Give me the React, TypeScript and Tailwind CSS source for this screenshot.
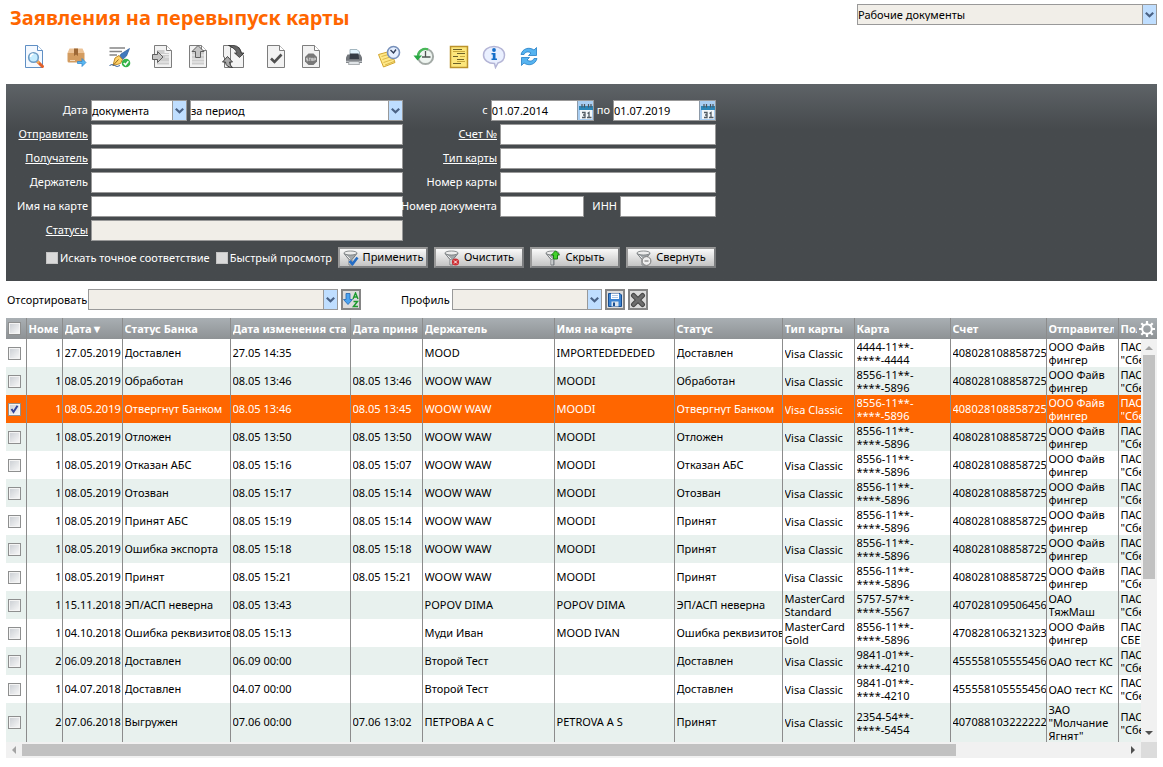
import { type ReactNode } from 'react'

/** Список заявлений на перевыпуск карты: панель действий, фильтр, сортировка, таблица. */

type Row = {
  num: string
  date: string
  bankStatus: string
  changed: string
  accepted: string
  holder: string
  cardName: string
  status: string
  type: string
  card: string
  account: string
  sender: string
  receiver: string
}

const SBER = 'ПАО "Сбербанк"'
const FIVE = 'ООО Файв фингер'
const ACC = '4080281088587257'

const woow = (bankStatus: string, changed: string, accepted: string, status = bankStatus): Row => ({
  num: '1', date: '08.05.2019', bankStatus, changed, accepted, holder: 'WOOW WAW', cardName: 'MOODI',
  status, type: 'Visa Classic', card: '8556-11**-****-5896', account: ACC, sender: FIVE, receiver: SBER,
})

const ROWS: Row[] = [
  { ...woow('Доставлен', '27.05 14:35', ''), date: '27.05.2019', holder: 'MOOD', cardName: 'IMPORTEDEDEDED', card: '4444-11**-****-4444' },
  woow('Обработан', '08.05 13:46', '08.05 13:46'),
  woow('Отвергнут Банком', '08.05 13:46', '08.05 13:45'),
  woow('Отложен', '08.05 13:50', '08.05 13:50'),
  woow('Отказан АБС', '08.05 15:16', '08.05 15:07'),
  woow('Отозван', '08.05 15:17', '08.05 15:14'),
  woow('Принят АБС', '08.05 15:19', '08.05 15:14', 'Принят'),
  woow('Ошибка экспорта', '08.05 15:18', '08.05 15:18', 'Принят'),
  woow('Принят', '08.05 15:21', '08.05 15:21'),
  { num: '1', date: '15.11.2018', bankStatus: 'ЭП/АСП неверна', changed: '08.05 13:43', accepted: '', holder: 'POPOV DIMA', cardName: 'POPOV DIMA', status: 'ЭП/АСП неверна', type: 'MasterCard Standard', card: '5757-57**-****-5567', account: '4070281095064560', sender: 'ОАО ТяжМаш', receiver: SBER },
  { num: '1', date: '04.10.2018', bankStatus: 'Ошибка реквизитов', changed: '08.05 15:13', accepted: '', holder: 'Муди Иван', cardName: 'MOOD IVAN', status: 'Ошибка реквизитов', type: 'MasterCard Gold', card: '8556-11**-****-5896', account: '4708281063213232', sender: FIVE, receiver: 'ПАО СБЕРБАНК' },
  { num: '2', date: '06.09.2018', bankStatus: 'Доставлен', changed: '06.09 00:00', accepted: '', holder: 'Второй Тест', cardName: '', status: 'Доставлен', type: 'Visa Classic', card: '9841-01**-****-4210', account: '4555581055554564', sender: 'ОАО тест КС', receiver: SBER },
  { num: '1', date: '04.07.2018', bankStatus: 'Доставлен', changed: '04.07 00:00', accepted: '', holder: 'Второй Тест', cardName: '', status: 'Доставлен', type: 'Visa Classic', card: '9841-01**-****-4210', account: '4555581055554564', sender: 'ОАО тест КС', receiver: SBER },
  { num: '2', date: '07.06.2018', bankStatus: 'Выгружен', changed: '07.06 00:00', accepted: '07.06 13:02', holder: 'ПЕТРОВА А С', cardName: 'PETROVA A S', status: 'Принят', type: 'Visa Classic', card: '2354-54**-****-5454', account: '4070881032222222', sender: 'ЗАО "Молчание Ягнят"', receiver: SBER },
]

const SELECTED = 2

const COLUMNS: { key: keyof Row; title: string; width: string }[] = [
  { key: 'num', title: 'Номер', width: 'w-[36px]' },
  { key: 'date', title: 'Дата▼', width: 'w-[60px]' },
  { key: 'bankStatus', title: 'Статус Банка', width: 'w-[108px]' },
  { key: 'changed', title: 'Дата изменения статуса', width: 'w-[120px]' },
  { key: 'accepted', title: 'Дата принятия', width: 'w-[72px]' },
  { key: 'holder', title: 'Держатель', width: 'w-[132px]' },
  { key: 'cardName', title: 'Имя на карте', width: 'w-[120px]' },
  { key: 'status', title: 'Статус', width: 'w-[108px]' },
  { key: 'type', title: 'Тип карты', width: 'w-[72px]' },
  { key: 'card', title: 'Карта', width: 'w-[96px]' },
  { key: 'account', title: 'Счет', width: 'w-[96px]' },
  { key: 'sender', title: 'Отправитель', width: 'w-[72px]' },
  { key: 'receiver', title: 'Получатель', width: '' },
]

/** Столбцы, в которых текст переносится на несколько строк. */
const WRAPPED: (keyof Row)[] = ['card', 'type', 'sender', 'receiver']

/* ---------- Значки ---------- */

function Svg({ size = 24, children }: { size?: number; children: ReactNode }) {
  return (
    <svg width={size} height={size} viewBox={`0 0 ${size} ${size}`} fill="none" aria-hidden="true" className="shrink-0">
      {children}
    </svg>
  )
}

function Sheet({ blue = false }: { blue?: boolean }) {
  const line = blue ? '#5f8fc4' : '#7d7d7d'
  return (
    <>
      <path d="M3.500 .5H15.500L20.500 5.500V22.500H3.500Z" fill={blue ? '#f4f9ff' : '#f2f2f2'} stroke={line} />
      <path d="M15.500 .5V5.500H20.500" fill="#fff" stroke={line} />
    </>
  )
}

const ViewIcon = () => (
  <Svg>
    <Sheet blue />
    <path d="M15.500 16.500L20.500 21.500" stroke="#e2602a" strokeWidth="3" strokeLinecap="round" />
    <path d="M15 16L17 18" stroke="#f0b45a" strokeWidth="2" />
    <circle cx="11.500" cy="12.500" r="4.800" fill="#c4ecff" stroke="#6d9cc4" strokeWidth="1.600" />
    <path d="M8.500 12a3 3 0 0 1 3-3" stroke="#fff" strokeWidth="1.500" />
  </Svg>
)

const BoxIcon = () => (
  <Svg>
    <path d="M4.500 3.500H17.500L19.500 8H2.500Z" fill="#ecc295" />
    <path d="M2.500 8H19.500V16Q19.500 17.500 18 17.500H4Q2.500 17.500 2.500 16Z" fill="#d39c60" />
    <path d="M5 15.500H10" stroke="#f3dcc0" />
    <path d="M9 3.500H13V11L11 9.500L9 11Z" fill="#9d6836" />
    <path d="M12.500 16.500H17V13.500L21 17.500L17 21.500V18.500H12.500Z" fill="#58b7f2" stroke="#2d83c9" strokeWidth=".7" />
  </Svg>
)

const SignIcon = () => (
  <Svg>
    <path d="M1.500 3H17M1.500 6.500H14M1.500 10H9" stroke="#858585" strokeWidth="1.400" />
    <path d="M21.500 3.500L13 9L10.500 13L13.500 15.500L18.500 11Z" fill="#4179bd" stroke="#2c5b9b" strokeWidth=".7" />
    <path d="M5 20.500L7 13L11 10.500L14.500 14.500L12.500 18.500Z" fill="#ffd36a" stroke="#bf8b2a" />
    <path d="M5 20.500L10.500 14.500" stroke="#96651b" />
    <path d="M1.500 20.500Q4 18.500 6.500 20.500T12 20.500" stroke="#38649c" />
    <circle cx="18" cy="18" r="4.300" fill="#35b44a" />
    <path d="M15.700 18L17.500 19.800L20.400 16.200" stroke="#fff" strokeWidth="1.500" />
  </Svg>
)

const ImportIcon = () => (
  <Svg>
    <Sheet />
    <path d="M6 5H13.500V8H18V19.500H6Z" fill="#cdcdcd" />
    <path d="M6 9.500H18M14 12H18M6 17H18" stroke="#efefef" />
    <path d="M1.500 9.500H6.500V6.500L12 12L6.500 17.500V14.500H1.500Z" fill="#c5c5c5" stroke="#5e5e5e" />
  </Svg>
)

const ExportIcon = () => (
  <Svg>
    <Sheet />
    <path d="M6 6H18V19.500H6Z" fill="#cdcdcd" />
    <path d="M6 10H9M15 10H18M6 14H18M6 17H18" stroke="#efefef" />
    <path d="M9.500 12.500V6.500H6L12 .5L18 6.500H14.500V12.500Z" fill="#c5c5c5" stroke="#5e5e5e" />
  </Svg>
)

const ExchangeIcon = () => (
  <Svg>
    <path d="M2.500 .5H9L12 4V22.500H3.500V12H2.500Z" fill="#f2f2f2" stroke="#777" />
    <path d="M9.500 2.500H18L22.500 11V22.500H9.500Z" fill="#f4f4f4" stroke="#777" />
    <path d="M7.500 .5H13Q19 1 20 8H23L18.500 12.500L13.500 8H16Q14 3 7.500 .5Z" fill="#666" stroke="#222" strokeWidth=".7" />
    <path d="M1.500 17L6.500 11.500L11.500 17H8.500Q8.500 20 11.500 22.500Q4.500 22 4.500 17Z" fill="#aaa" stroke="#333" strokeWidth=".9" />
  </Svg>
)

const CheckIcon = () => (
  <Svg>
    <Sheet />
    <path d="M7 13.500L10.500 17L17.500 9.500" stroke="#505050" strokeWidth="2.600" />
  </Svg>
)

const StopIcon = () => (
  <Svg>
    <Sheet />
    <path d="M9.500 8.500H14.500L18 12V16.500L14.500 20H9.500L6 16.500V12Z" fill="#787878" />
    <path d="M7.500 13.200H9M7.500 13.200V14.500H9V15.800H7.500M9.800 13.200H11.800M10.800 13.200V16M12.600 13.200H13.600V15.600H12.600ZM14.800 16V13.200H16.500V14.800H15" stroke="#dedede" strokeWidth=".8" />
  </Svg>
)

const PrintIcon = () => (
  <Svg>
    <path d="M8 10V4.500H15L17.500 7V12H8Z" fill="#e3f5ff" stroke="#a4b7c0" />
    <path d="M5.500 9.500H18.500L20 12.500V18H4V12.500Z" fill="#73777c" />
    <path d="M8 8.500H16.500L17 14H7.500Z" fill="#353c46" />
    <path d="M4 16.500H20" stroke="#b9bcc0" strokeWidth="1.500" />
    <path d="M7 16.500H17L17.500 19.500H6.500Z" fill="#e0e4e7" stroke="#8f9397" strokeWidth=".7" />
  </Svg>
)

const NoteClockIcon = () => (
  <Svg>
    <path d="M1.500 9.500L14 6L18 17.500L6.500 22Z" fill="#ffe887" stroke="#d2a52f" />
    <path d="M4.500 11.500L15 8.500M5.500 14.500L16 11M6.500 17.500L17 14M8 20L17 16.500" stroke="#dcb84b" />
    <circle cx="16.500" cy="7.500" r="6" fill="#e5efff" stroke="#7790ba" strokeWidth="1.600" />
    <path d="M13.500 5L16.500 8L19 4.500" stroke="#303d58" strokeWidth="1.400" />
  </Svg>
)

const HistoryIcon = () => (
  <Svg>
    <circle cx="13.500" cy="11.500" r="7.600" fill="#eff5f1" stroke="#a3aaa6" strokeWidth="2" />
    <path d="M16 4.400A7.600 7.600 0 0 0 5.900 11" stroke="#48b858" strokeWidth="2.200" />
    <path d="M1.500 10.500H10L5.500 15.500Z" fill="#29a744" />
    <path d="M13.500 6V12H18.500M10 12H13" stroke="#505553" strokeWidth="1.300" />
  </Svg>
)

const JournalIcon = () => (
  <Svg>
    <path d="M3.500 1.500H20.500V22.500H3.500Z" fill="#fce67b" stroke="#bb922b" strokeWidth="1.500" />
    <path d="M6 4.500H15M10 8.500H18M6 11.500H11M10 14.500H17M6 18.500H14" stroke="#6b612b" strokeWidth="1.200" />
    <path d="M6 6.500H18M13 11.500H18M10 16.500H18" stroke="#c9a93d" />
  </Svg>
)

const InfoIcon = () => (
  <Svg>
    <path d="M12 1.500C18 1.500 22.500 5 22.500 10C22.500 14 20 17 16 18L13.500 22.500L12.500 18.500C6 18.500 1.500 15 1.500 10C1.500 5 6 1.500 12 1.500Z" fill="#eaf0ff" stroke="#b4b5d6" strokeWidth="1.500" />
    <circle cx="12" cy="5" r="1.900" fill="#176fc9" />
    <path d="M9.500 8H13.500V13.500H15V15H9.500V13.500H10.800V9.500H9.500Z" fill="#176fc9" />
  </Svg>
)

const RefreshIcon = () => (
  <Svg>
    <path d="M4 9.500C5.500 3.500 12 1.500 17 5L19.500 2.500V10.500H11.500L14 8C11 6 8 7 7 9.500Z" fill="#56b3f0" stroke="#257fc5" strokeWidth=".8" />
    <path d="M20 13.500C18.500 19.500 12 21.500 7 18L4.500 20.500V12.500H12.500L10 15C13 17 16 16 17 13.500Z" fill="#56b3f0" stroke="#257fc5" strokeWidth=".8" />
  </Svg>
)

/** Воронка — основа значков на кнопках фильтра. */
const Funnel = () => (
  <>
    <path d="M1 3.500L6 9.500V15H9V9.500L14 3.500Z" fill="#a3a8ab" stroke="#666b6e" strokeWidth=".8" />
    <path d="M7 10V14.500M3.500 5.500L7 9" stroke="#eee" />
    <ellipse cx="7.500" cy="3" rx="6.500" ry="2" fill="#ececec" stroke="#6e7376" strokeWidth=".8" />
  </>
)

const ApplyIcon = () => (
  <Svg size={16}><Funnel /><path d="M6.500 11L9.500 14L14.500 7.500" stroke="#246cc4" strokeWidth="2.600" /></Svg>
)
const ClearIcon = () => (
  <Svg size={16}>
    <Funnel />
    <circle cx="11.500" cy="12" r="3.600" fill="#cf2e34" />
    <path d="M10 10.500L13 13.500M13 10.500L10 13.500" stroke="#fff" />
  </Svg>
)
const HideIcon = () => (
  <Svg size={16}><Funnel /><path d="M8.500 9V5H6.500L10.500 .8L14.500 5H12.500V9Z" fill="#43d22c" stroke="#16810d" /></Svg>
)
const CollapseIcon = () => (
  <Svg size={16}>
    <Funnel />
    <circle cx="10.500" cy="11" r="4.400" fill="#eee" stroke="#777" />
    <path d="M8.500 11H12.500" stroke="#666" />
  </Svg>
)

const SortIcon = () => (
  <Svg size={16}>
    <path d="M3 1.500H7V7.500H9.500L5 12.500L.5 7.500H3Z" fill="#4ba3f0" stroke="#2164b0" strokeWidth=".8" />
    <path d="M10 7L12.500 1L15 7M11 5H14" stroke="#1c9a2e" strokeWidth="1.400" />
    <path d="M10.500 9.500H14.500L10.500 14.500H15" stroke="#1c9a2e" strokeWidth="1.500" />
  </Svg>
)

const SaveIcon = () => (
  <Svg size={16}>
    <path d="M1.500 1.500H13L14.500 3V14.500H1.500Z" fill="#3b83d2" stroke="#164d91" />
    <path d="M4 1.500H12V7H4Z" fill="#fff" />
    <path d="M5 3.500H11M5 5.500H11" stroke="#a9c5e5" />
    <path d="M4.500 9.500H11.500V14.500H4.500Z" fill="#dce4ed" />
    <path d="M6 10.500H8V14H6Z" fill="#194e90" />
  </Svg>
)

const DeleteIcon = () => (
  <Svg size={16}>
    <path d="M3.500 3.500L12.500 12.500M12.500 3.500L3.500 12.500" stroke="#474747" strokeWidth="5" strokeLinecap="round" />
    <path d="M3.500 3.500L12.500 12.500M12.500 3.500L3.500 12.500" stroke="#6d6d6d" strokeWidth="3" strokeLinecap="round" />
  </Svg>
)

const GearIcon = () => (
  <Svg size={16}>
    <circle cx="8" cy="8" r="4.800" stroke="#fff" strokeWidth="2" />
    <path d="M8 0V3.500M8 12.500V16M0 8H3.500M12.500 8H16M2.300 2.300L4.800 4.800M11.200 11.200L13.700 13.700M13.700 2.300L11.200 4.800M4.800 11.200L2.300 13.700" stroke="#fff" strokeWidth="2.200" />
  </Svg>
)

const CalendarIcon = () => (
  <svg width="16" height="19" viewBox="0 0 16 19" fill="none" aria-hidden="true">
    <rect width="16" height="19" fill="#a9cef2" />
    <path d="M.5 0V19" stroke="#8d9aa8" />
    <path d="M3 8H15V18H3Z" fill="#f3f7fa" />
    <path d="M2 5H16V9H2Z" fill="#2b86b8" />
    <path d="M5 3V6.500M7.500 3V6.500M11.500 3V6.500M14 3V6.500" stroke="#4e555b" strokeWidth="1.200" />
    <path d="M5 11.500H8V16.500H5M6 14H8M10.500 12.500L12 11.500V16.500M10 16.500H14.500" stroke="#515b64" strokeWidth="1.300" />
  </svg>
)

/* ---------- Элементы формы ---------- */

const FIELD = 'h-[21px] border border-[#999] px-px text-black outline-none rounded-none'

function Select({ label, value, width, muted = false }: { label: string; value: string; width: string; muted?: boolean }) {
  return (
    <div className={`relative ${width}`}>
      <select aria-label={label} className={`block h-[21px] w-full appearance-none rounded-none border border-[#999] text-black outline-none ${muted ? 'bg-[#f1eee8]' : 'bg-white'}`}>
        <option>{value}</option>
      </select>
      <span className="pointer-events-none absolute inset-y-px right-px flex w-[14px] items-center justify-center border-l border-[#999] bg-[#bfdeff]">
        <svg width="9" height="6" viewBox="0 0 9 6" fill="none"><path d="M.8 .8L4.500 4.200L8.200 .8" stroke="#4a6285" strokeWidth="2.200" /></svg>
      </span>
    </div>
  )
}

function DateField({ id, value }: { id: string; value: string }) {
  return (
    <div className="flex h-[21px] w-[103px] border border-[#999] bg-white">
      <input id={id} defaultValue={value} className="min-w-0 flex-1 text-black outline-none" />
      <button type="button" aria-label="Календарь"><CalendarIcon /></button>
    </div>
  )
}

function Label({ htmlFor, link = false, children }: { htmlFor: string; link?: boolean; children: ReactNode }) {
  return (
    <label htmlFor={htmlFor} className={`flex justify-end pr-[3px] pb-0.5 whitespace-nowrap ${link ? 'underline' : ''}`}>
      {children}
    </label>
  )
}

function FilterButton({ icon, children }: { icon: ReactNode; children: ReactNode }) {
  return (
    <button
      type="button"
      className="flex h-[21px] w-[90px] items-center justify-center gap-1 border-2 border-[#7b7d7f] border-t-[#999] border-l-[#999] bg-linear-to-b from-[#fafafa] to-[#c4c4c4] whitespace-nowrap text-black"
    >
      {icon}
      <span className="pb-0.5">{children}</span>
    </button>
  )
}

function SquareButton({ label, children }: { label: string; children: ReactNode }) {
  return (
    <button type="button" aria-label={label} className="flex h-[21px] w-5 items-center justify-center border-2 border-[#858585] bg-[#dcdcdc]">
      {children}
    </button>
  )
}

function Check({ label, checked = false }: { label: string; checked?: boolean }) {
  return (
    <span className="relative block size-[13px]">
      <input
        type="checkbox"
        aria-label={label}
        defaultChecked={checked}
        className="block size-[13px] appearance-none border border-[#8e8f8f] bg-linear-to-br from-[#c9cdd2] to-[#fafafa] shadow-[inset_0_0_0_1px_#f4f4f4]"
      />
      {checked && (
        <svg viewBox="0 0 13 13" fill="none" className="pointer-events-none absolute inset-0">
          <path d="M3.500 6L5.500 9L9.500 2.800" stroke="#31439a" strokeWidth="2" />
        </svg>
      )}
    </span>
  )
}

/* ---------- Блоки страницы ---------- */

const TOOLBAR: { label: string; Icon: () => ReactNode }[][] = [
  [{ label: 'Просмотр', Icon: ViewIcon }],
  [{ label: 'В архив', Icon: BoxIcon }],
  [{ label: 'Подписать', Icon: SignIcon }],
  [{ label: 'Импорт', Icon: ImportIcon }, { label: 'Экспорт', Icon: ExportIcon }, { label: 'Обмен', Icon: ExchangeIcon }],
  [{ label: 'Принять', Icon: CheckIcon }, { label: 'Отвергнуть', Icon: StopIcon }],
  [
    { label: 'Печать', Icon: PrintIcon },
    { label: 'Отложить', Icon: NoteClockIcon },
    { label: 'История', Icon: HistoryIcon },
    { label: 'Журнал', Icon: JournalIcon },
    { label: 'Информация', Icon: InfoIcon },
    { label: 'Обновить', Icon: RefreshIcon },
  ],
]

function Toolbar() {
  return (
    <div className="flex gap-[19px] pt-[15px] pl-4">
      {TOOLBAR.map((group) => (
        <div key={group[0].label} className="flex gap-[11px]">
          {group.map(({ label, Icon }) => (
            <button key={label} type="button" aria-label={label} title={label} className="size-6">
              <Icon />
            </button>
          ))}
        </div>
      ))}
    </div>
  )
}

function FilterPanel() {
  return (
    <form className="mt-[15px] bg-[#464a4d] bg-linear-to-b from-[#5e6367] to-[#464a4d] to-[45px] pt-4 pb-[13px] text-white">
      <div className="grid grid-cols-[85px_312px_97px_216px] items-center gap-y-[3px]">
        <Label htmlFor="date-from">Дата</Label>
        <div className="flex gap-[3px]">
          <Select label="Дата" value="документа" width="w-24" />
          <Select label="Период" value="за период" width="flex-1" />
        </div>
        <div className="col-span-2 flex items-center justify-end">
          <Label htmlFor="date-from">с</Label>
          <DateField id="date-from" value="01.07.2014" />
          <span className="w-[3px]" />
          <Label htmlFor="date-to">по</Label>
          <DateField id="date-to" value="01.07.2019" />
        </div>

        <Label htmlFor="sender" link>Отправитель</Label>
        <input id="sender" className={`${FIELD} bg-white`} />
        <Label htmlFor="account" link>Счет №</Label>
        <input id="account" className={`${FIELD} bg-white`} />

        <Label htmlFor="receiver" link>Получатель</Label>
        <input id="receiver" className={`${FIELD} bg-white`} />
        <Label htmlFor="card-type" link>Тип карты</Label>
        <input id="card-type" className={`${FIELD} bg-white`} />

        <Label htmlFor="holder">Держатель</Label>
        <input id="holder" className={`${FIELD} bg-white`} />
        <Label htmlFor="card-number">Номер карты</Label>
        <input id="card-number" className={`${FIELD} bg-white`} />

        <Label htmlFor="card-name">Имя на карте</Label>
        <input id="card-name" className={`${FIELD} bg-white`} />
        <Label htmlFor="doc-number">Номер документа</Label>
        <div className="flex items-center justify-between">
          <input id="doc-number" className={`${FIELD} w-[84px] bg-white`} />
          <div className="flex items-center">
            <Label htmlFor="inn">ИНН</Label>
            <input id="inn" className={`${FIELD} w-24 bg-white`} />
          </div>
        </div>

        <Label htmlFor="statuses" link>Статусы</Label>
        <input id="statuses" readOnly className={`${FIELD} bg-[#f1eee8]`} />
      </div>

      <div className="mt-1.5 flex w-[710px] items-center justify-end gap-1.5">
        {['Искать точное соответствие', 'Быстрый просмотр'].map((text) => (
          <label key={text} className="flex items-center gap-0.5 whitespace-nowrap">
            <input type="checkbox" className="size-3 appearance-none border border-[#c4c4c4] bg-[#dadada]" />
            {text}
          </label>
        ))}
        <FilterButton icon={<ApplyIcon />}>Применить</FilterButton>
        <FilterButton icon={<ClearIcon />}>Очистить</FilterButton>
        <FilterButton icon={<HideIcon />}>Скрыть</FilterButton>
        <FilterButton icon={<CollapseIcon />}>Свернуть</FilterButton>
      </div>
    </form>
  )
}

function SortBar() {
  return (
    <div className="mt-2 flex items-center gap-[3px] pl-px">
      <span className="w-[78px]">Отсортировать</span>
      <Select label="Отсортировать" value="" width="w-[250px]" muted />
      <SquareButton label="Порядок"><SortIcon /></SquareButton>
      <span className="ml-[37px] w-12">Профиль</span>
      <Select label="Профиль" value="" width="w-[150px]" muted />
      <SquareButton label="Сохранить профиль"><SaveIcon /></SquareButton>
      <SquareButton label="Удалить профиль"><DeleteIcon /></SquareButton>
    </div>
  )
}

const HEAD = 'bg-linear-to-b from-[#a9afb3] to-[#8e9295]'

function rowColor(i: number) {
  if (i === SELECTED) return 'bg-[#ff6600] text-white'
  return i % 2 === 0 ? 'bg-white' : 'bg-[#e8f1ee]'
}

function DocumentsTable() {
  return (
    <div className="mt-2">
      <div className="flex">
        <div className="min-w-0 flex-1 overflow-hidden">
          <table className="w-full table-fixed border-collapse">
            <thead>
              <tr className={`h-[21px] text-left text-white ${HEAD}`}>
                <th className="w-5 pl-0.5"><Check label="Выбрать все" /></th>
                {COLUMNS.map((c) => (
                  <th key={c.key} className={`border-l border-[#8c8c8c] p-0 pl-0.5 font-bold whitespace-nowrap ${c.width}`}>
                    <div className="mr-1 overflow-hidden">{c.title}</div>
                  </th>
                ))}
              </tr>
            </thead>
            <tbody>
              {ROWS.map((row, i) => (
                <tr key={i} className={`h-7 ${rowColor(i)}`}>
                  <td className="p-0 pl-0.5"><Check label="Выбрать строку" checked={i === SELECTED} /></td>
                  {COLUMNS.map((c) => (
                    <td
                      key={c.key}
                      className={`overflow-hidden border-l border-[#8c8c8c] p-0 pl-0.5 ${c.key === 'num' ? 'text-right' : ''} ${WRAPPED.includes(c.key) ? '' : 'pb-0.5 whitespace-nowrap'}`}
                    >
                      <div className="overflow-hidden">{row[c.key]}</div>
                    </td>
                  ))}
                </tr>
              ))}
            </tbody>
          </table>
        </div>
        <div className="flex w-4 flex-col">
          <div className={`flex h-[21px] items-center justify-center ${HEAD}`}>
            <button type="button" aria-label="Настройка столбцов" className="-ml-1"><GearIcon /></button>
          </div>
          <div className="flex flex-1 flex-col items-center bg-[#f1f1f1]">
            <svg width="8" height="16" viewBox="0 0 8 16" className="shrink-0"><path d="M0 11H8L4 7Z" fill="#a3a3a3" /></svg>
            <div className="w-3 flex-[224] bg-[#c1c1c1]" />
            <div className="flex-[147]" />
            <svg width="8" height="16" viewBox="0 0 8 16" className="shrink-0"><path d="M0 5H8L4 9Z" fill="#505050" /></svg>
          </div>
        </div>
      </div>
      <div className="flex h-4">
        <div className="flex flex-1 items-center bg-[#f1f1f1]">
          <svg width="16" height="8" viewBox="0 0 16 8" className="shrink-0"><path d="M10 0V8L6 4Z" fill="#a3a3a3" /></svg>
          <div className="h-3 flex-[934] bg-[#c1c1c1]" />
          <div className="flex-[169]" />
          <svg width="16" height="8" viewBox="0 0 16 8" className="shrink-0"><path d="M6 0V8L10 4Z" fill="#505050" /></svg>
        </div>
        <div className="w-4 bg-[#dcdcdc]" />
      </div>
    </div>
  )
}

export default function App() {
  return (
    <main className="bg-white px-1.5 pt-1 pb-2 font-['Noto_Sans',sans-serif] text-[11px] leading-[13px] text-black">
      <header className="flex items-start justify-between">
        <h1 className="pt-0.5 pl-1 text-xl leading-6 font-bold text-[#ff6600]">Заявления на перевыпуск карты</h1>
        <Select label="Раздел" value="Рабочие документы" width="w-[300px]" muted />
      </header>
      <Toolbar />
      <FilterPanel />
      <SortBar />
      <DocumentsTable />
    </main>
  )
}
